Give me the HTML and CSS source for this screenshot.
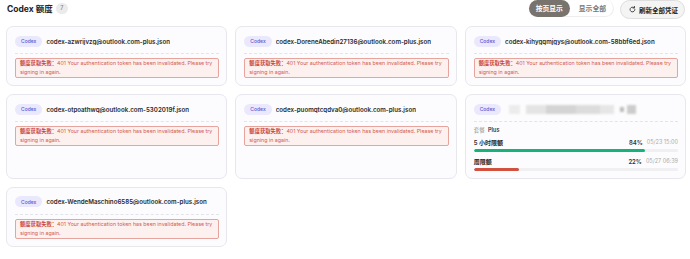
FILE: index.html
```html
<!DOCTYPE html>
<html lang="zh-CN">
<head>
  <meta charset="UTF-8" />
  <meta name="viewport" content="width=device-width, initial-scale=1.0"/>
  <title>Codex 额度</title>
  <link rel="stylesheet" href="styles.css">
</head>
<body>
  <div class="header">
    <div class="title">
      Codex 额度
      <span class="count">7</span>
    </div>
    <div class="actions">
      <div class="segment">
        <button class="seg-btn active">按页显示</button>
        <button class="seg-btn">显示全部</button>
      </div>
      <button class="refresh-btn"><span class="refresh-icon">
        <svg viewBox="0 0 16 16" width="7" height="7"><path d="M13.5 8a5.5 5.5 0 1 1-1.7-4" fill="none" stroke="#333" stroke-width="2" stroke-linecap="round"/><path d="M12.5 1v3.5H9" fill="none" stroke="#333" stroke-width="2" stroke-linecap="round" stroke-linejoin="round"/></svg>
      </span>刷新全部凭证</button>
    </div>
  </div>

  <div class="grid">
    <div class="card">
      <div class="card-head"><span class="tag">Codex</span><span class="name">codex-azwrijvzg@outlook.com-plus.json</span></div>
      <div class="divider"></div>
      <div class="error"><b>额度获取失败：</b>401 Your authentication token has been invalidated. Please try signing in again.</div>
    </div>
    <div class="card">
      <div class="card-head"><span class="tag">Codex</span><span class="name">codex-DoreneAbedin27136@outlook.com-plus.json</span></div>
      <div class="divider"></div>
      <div class="error"><b>额度获取失败：</b>401 Your authentication token has been invalidated. Please try signing in again.</div>
    </div>
    <div class="card">
      <div class="card-head"><span class="tag">Codex</span><span class="name">codex-kihygqmjgys@outlook.com-58bbf6ed.json</span></div>
      <div class="divider"></div>
      <div class="error"><b>额度获取失败：</b>401 Your authentication token has been invalidated. Please try signing in again.</div>
    </div>
    <div class="card">
      <div class="card-head"><span class="tag">Codex</span><span class="name">codex-otpoathwq@outlook.com-5302019f.json</span></div>
      <div class="divider"></div>
      <div class="error"><b>额度获取失败：</b>401 Your authentication token has been invalidated. Please try signing in again.</div>
    </div>
    <div class="card">
      <div class="card-head"><span class="tag">Codex</span><span class="name">codex-puomqtcqdva0@outlook.com-plus.json</span></div>
      <div class="divider"></div>
      <div class="error"><b>额度获取失败：</b>401 Your authentication token has been invalidated. Please try signing in again.</div>
    </div>
    <div class="card">
      <div class="card-head">
        <span class="tag">Codex</span>
        <span class="redacted">
          <i class="blk b1"></i><i class="blk b2"></i><i class="blk b3"></i><i class="blk b4"></i><i class="blk b5"></i><i class="blk b6"></i><i class="blk b7"></i>
        </span>
      </div>
      <div class="divider"></div>
      <div class="plan"><span class="plan-label">套餐</span> Plus</div>
      <div class="quota">
        <div class="quota-row">
          <span class="quota-name">5 小时限额</span>
          <span class="quota-pct">84%</span>
          <span class="quota-time">05/23 15:00</span>
        </div>
        <div class="bar"><div class="fill green" style="width: 84%"></div></div>
      </div>
      <div class="quota">
        <div class="quota-row">
          <span class="quota-name">周限额</span>
          <span class="quota-pct">22%</span>
          <span class="quota-time">05/27 06:39</span>
        </div>
        <div class="bar"><div class="fill red" style="width: 22%"></div></div>
      </div>
    </div>
    <div class="card">
      <div class="card-head"><span class="tag">Codex</span><span class="name">codex-WendeMaschino6585@outlook.com-plus.json</span></div>
      <div class="divider"></div>
      <div class="error"><b>额度获取失败：</b>401 Your authentication token has been invalidated. Please try signing in again.</div>
    </div>
  </div>
</body>
</html>
```

FILE: styles.css
```css
html, body {
  margin: 0;
  padding: 0;
  background: #fff;
  color: #222;
  font-family: Inter, "Noto Sans CJK SC", sans-serif;
}

.header {
  display: flex;
  align-items: flex-start;
  justify-content: space-between;
  height: 19px;
  padding: 0 5px 0 7px;
  margin-bottom: 7px;
}

.title {
  display: flex;
  align-items: center;
  gap: 3px;
  height: 16px;
  font-size: 8.5px;
  font-weight: 700;
  color: #222;
}

.count {
  display: inline-flex;
  align-items: center;
  justify-content: center;
  width: 12px;
  height: 11px;
  border-radius: 6px;
  background: #ebebeb;
  color: #888;
  font-size: 5.5px;
  font-weight: 500;
}

.actions {
  display: flex;
  align-items: flex-start;
  gap: 6px;
}

button {
  font-family: inherit;
  cursor: pointer;
}

.segment {
  display: flex;
  align-items: center;
  gap: 2px;
  height: 17px;
  border: 1px solid #eeeeee;
  border-left: none;
  border-top: none;
  border-radius: 9px;
  background: #fff;
  box-sizing: border-box;
}

.seg-btn {
  height: 17px;
  padding: 0 7px;
  border: none;
  border-radius: 9px;
  background: transparent;
  color: #777;
  font-size: 6.8px;
  font-weight: 600;
}

.seg-btn.active {
  background: #79736d;
  color: #fff;
}

.refresh-btn {
  display: flex;
  align-items: center;
  gap: 3px;
  height: 19px;
  padding: 0 6px 0 8px;
  border: 1px solid #dedede;
  border-radius: 10px;
  background: #f4f4f4;
  color: #222;
  font-size: 6.5px;
  font-weight: 700;
}

.refresh-icon {
  display: flex;
}

.grid {
  display: grid;
  grid-template-columns: repeat(3, minmax(0, 1fr));
  gap: 8px;
  padding: 0 4px 0 6px;
}

.card {
  border: 1px solid #e7e7ee;
  border-radius: 7px;
  background: #fcfcfe;
  padding: 8px 7px 7px 8px;
}

.card-head {
  display: flex;
  align-items: center;
  gap: 4px;
  height: 12px;
}

.tag {
  display: inline-flex;
  align-items: center;
  height: 11px;
  padding: 0 6px;
  border-radius: 6px;
  background: #eae8fc;
  color: #5b56d4;
  font-size: 5px;
  font-weight: 500;
}

.name {
  font-size: 6.2px;
  font-weight: 600;
  color: #2a2a2a;
  white-space: nowrap;
  overflow: hidden;
}

.divider {
  border-top: 1px dashed #e4e4e8;
  margin: 6px 0 4px;
}

.error {
  border: 1px solid #e6a49c;
  border-radius: 2px;
  background: #fdf1f0;
  padding: 0 2px 0 4px;
  font-size: 5.3px;
  line-height: 9px;
  color: #d25a4f;
}

.error b {
  font-weight: 600;
  color: #c9463b;
}

.redacted {
  display: flex;
  align-items: center;
  height: 12px;
  filter: blur(1px);
}

.blk {
  display: block;
  height: 9px;
  background: #d6d6d6;
}

.b1 { width: 11px; background: #ececec; margin-left: 4px; }
.b2 { width: 20px; background: #e4e4e4; margin-left: 6px; }
.b3 { width: 30px; background: #d4d4d4; }
.b4 { width: 24px; background: #dcdcdc; }
.b5 { width: 14px; background: #e6e6e6; }
.b6 { width: 4px; background: #bbb; margin-left: 6px; height: 5px; }
.b7 { width: 9px; background: #ccc; margin-left: 3px; }

.plan {
  font-size: 5.5px;
  line-height: 9px;
  color: #333;
  font-weight: 600;
}

.plan-label {
  color: #999;
  font-weight: 400;
  margin-right: 2px;
}

.quota {
  margin-top: 2.5px;
}

.quota + .quota {
  margin-top: 5px;
}

.quota-row {
  display: flex;
  align-items: center;
  gap: 4px;
  font-size: 6px;
  line-height: 9px;
}

.quota-name {
  flex: 1;
  font-weight: 600;
  color: #222;
}

.quota-pct {
  font-weight: 600;
  color: #333;
}

.quota-time {
  color: #aaa;
  font-size: 5.5px;
}

.bar {
  height: 3px;
  margin-top: 2px;
  border-radius: 2px;
  background: #f0f0f2;
  overflow: hidden;
}

.fill {
  height: 100%;
  border-radius: 2px;
}

.fill.green { background: #16b27a; }
.fill.red { background: #d2503e; }
```
